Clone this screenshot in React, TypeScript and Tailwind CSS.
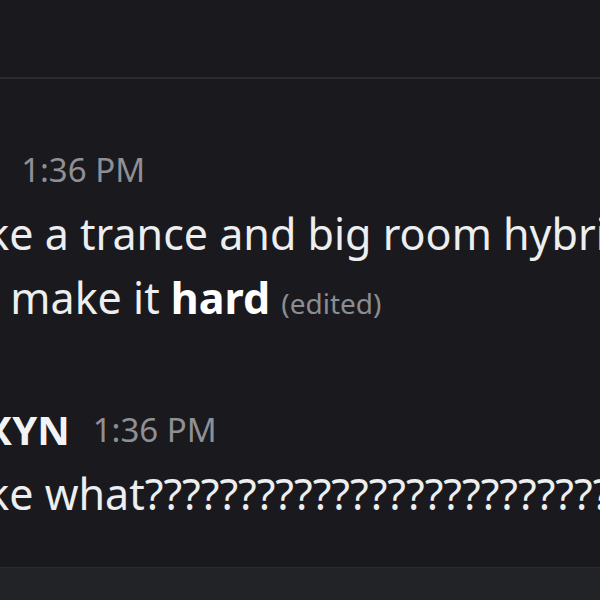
import React from 'react';

type Message = {
  author?: string;
  time?: string;
  lines: React.ReactNode[];
};

const messages: Message[] = [
  {
    author: 'Ren',
    time: '1:36 PM',
    lines: [
      'make a trance and big room hybrid',
      <>
        and make it <strong className="font-bold text-white">hard</strong>{' '}
        <span className="text-[28px] text-[#8b8d93]">(edited)</span>
      </>,
    ],
  },
  {
    author: 'NOXYN',
    time: '1:36 PM',
    lines: ['make what?????????????????????????'],
  },
];

const ChatMessage: React.FC<{ message: Message }> = ({ message }) => (
  <div className="flex flex-col">
    <div className="flex items-center leading-[65px] whitespace-nowrap">
      <span className="text-[40px] font-bold text-[#f2f3f5]">{message.author}</span>
      <span className="ml-[23px] text-[33px] text-[#8e9096]">{message.time}</span>
    </div>
    {message.lines.map((line, i) => (
      <div key={i} className="text-[43px] leading-[64px] text-[#eceef0] whitespace-nowrap">
        {line}
      </div>
    ))}
  </div>
);

export default function App() {
  return (
    <div
      className="w-[600px] h-[600px] overflow-hidden bg-[#1a1a1e] flex flex-col"
      style={{ fontFamily: '"Noto Sans", "Open Sans", sans-serif' }}
    >
      <div className="h-[77px] shrink-0" />
      <div className="h-[2px] shrink-0 bg-[#2b2b30]" />
      <div className="flex-1 flex flex-col gap-[62px] pt-[58px] -ml-[78px]">
        {messages.map((m, i) => (
          <ChatMessage key={i} message={m} />
        ))}
      </div>
      {/* composer strip along the bottom */}
      <div className="h-[33px] shrink-0 bg-[#222327] border-t border-[#2a2b30]" />
    </div>
  );
}
